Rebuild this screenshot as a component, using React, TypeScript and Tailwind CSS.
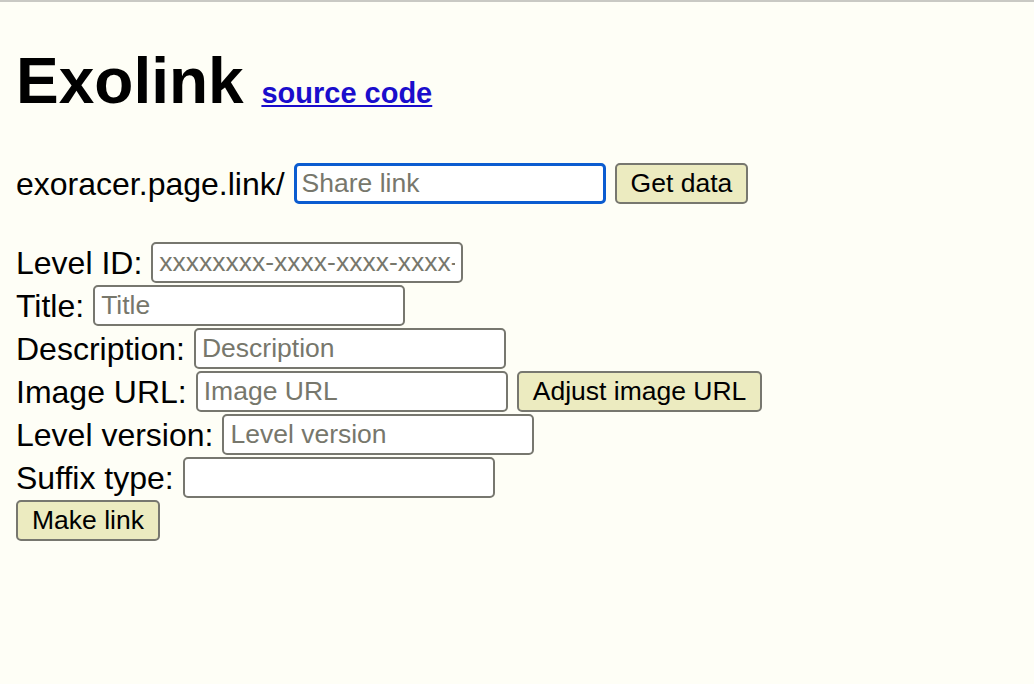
import React from "react";

const rows = [
  { label: "Level ID:", placeholder: "xxxxxxxx-xxxx-xxxx-xxxx-xxxxxxxxxxxx" },
  { label: "Title:", placeholder: "Title" },
  { label: "Description:", placeholder: "Description" },
  { label: "Image URL:", placeholder: "Image URL", button: "Adjust image URL" },
  { label: "Level version:", placeholder: "Level version" },
  { label: "Suffix type:", placeholder: "" },
];

const inputClass =
  "h-[41px] w-[312px] rounded-[5px] border-2 border-[#77776f] bg-white px-[6px] text-[26.5px] text-black placeholder:text-[#77776c] outline-none";

const buttonClass =
  "h-[41px] rounded-[5px] border-2 border-[#77776f] bg-[#ecebc0] px-[14px] text-[26.5px] leading-none text-black";

const App = () => {
  return (
    <div className="min-h-[684px] w-full border-t-2 border-[#c9c9c4] bg-[#fefef6] px-4 pt-[42px] font-['Liberation_Sans',Arial,sans-serif] text-[32px] text-black">
      <h1 className="text-[64px] font-bold leading-[74px] whitespace-nowrap">
        Exolink{" "}
        <a href="#" className="text-[29px] text-[#1a0dcc] underline">
          source code
        </a>
      </h1>

      <div className="mt-[32px] flex h-[43px] items-center gap-[9px]">
        <span>exoracer.page.link/</span>
        <input
          className="h-[41px] w-[312px] rounded-[5px] border-[3px] border-[#0b5cd0] bg-white px-[5px] text-[26.5px] text-black placeholder:text-[#77776c] outline-none"
          placeholder="Share link"
        />
        <button className={buttonClass}>Get data</button>
      </div>

      <div className="mt-[36px] flex flex-col">
        {rows.map((row) => (
          <div key={row.label} className="flex h-[43px] items-center gap-[9px]">
            <span className="whitespace-nowrap">{row.label}</span>
            <input className={inputClass} placeholder={row.placeholder} />
            {row.button && <button className={buttonClass}>{row.button}</button>}
          </div>
        ))}
        <div className="flex h-[43px] items-center">
          <button className={buttonClass}>Make link</button>
        </div>
      </div>
    </div>
  );
};

export default App;
